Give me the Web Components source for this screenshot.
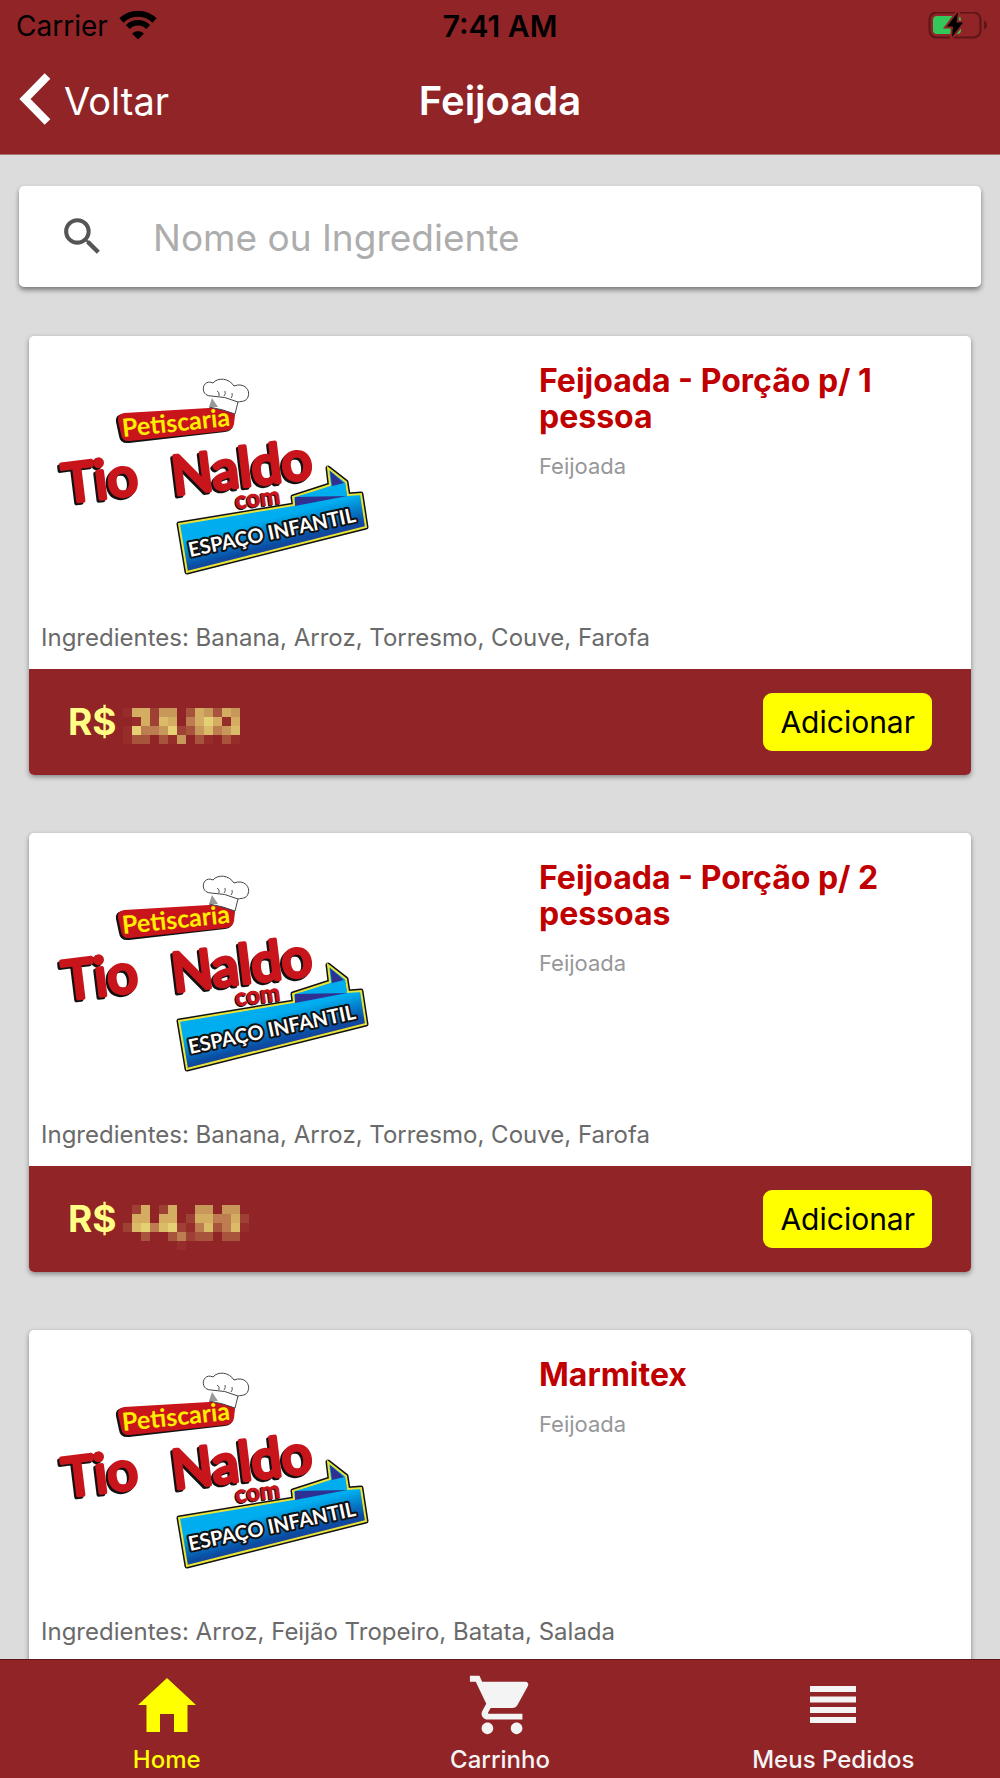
<!DOCTYPE html>
<html lang="pt-BR">
<head>
<meta charset="utf-8">
<meta name="viewport" content="width=device-width, initial-scale=1">
<title>Feijoada</title>
<style>
  :root {
    --brand: #902427;
    --accent: #ffff00;
    --page: #dcdcdc;
  }
  body {
    margin: 0;
    font-family: Inter, "Liberation Sans", sans-serif;
    background: var(--page);
  }
</style>
</head>
<body>

<app-screen>
  <status-bar slot="top" carrier="Carrier" time="7:41 AM"></status-bar>
  <nav-header slot="top" back="Voltar">Feijoada</nav-header>

  <search-box placeholder="Nome ou Ingrediente"></search-box>

  <product-card ingredients="Banana, Arroz, Torresmo, Couve, Farofa">
    <span slot="name">Feijoada - Porção p/ 1 pessoa</span>
    <span slot="category">Feijoada</span>
    <masked-price slot="price" rows="affbee.cfecfe .afbgf.dfhfaf ahddehbcegdeg acc.cae.ca.ca"></masked-price>
  </product-card>

  <product-card ingredients="Banana, Arroz, Torresmo, Couve, Farofa">
    <span slot="name">Feijoada - Porção p/ 2 pessoas</span>
    <span slot="category">Feijoada</span>
    <masked-price slot="price" rows=".bf.bf..ee.ee. .ff.ff.bffddfb bghdghbadgcdga ..c..cdbcc.cc. ......a......."></masked-price>
  </product-card>

  <product-card ingredients="Arroz, Feijão Tropeiro, Batata, Salada">
    <span slot="name">Marmitex</span>
    <span slot="category">Feijoada</span>
    <masked-price slot="price" rows="affbee.cfecfe .afbgf.dfhfaf ahddehbcegdeg acc.cae.ca.ca"></masked-price>
  </product-card>

  <tab-bar slot="bottom">
    <tab-item icon="home" active>Home</tab-item>
    <tab-item icon="cart">Carrinho</tab-item>
    <tab-item icon="list">Meus Pedidos</tab-item>
  </tab-bar>
</app-screen>

<script>
(function() {
  // builds a <template> from a string
  function html(str) {
    const template = document.createElement('template');
    template.innerHTML = str;
    return template;
  }

  class BaseElement extends HTMLElement {
    constructor() {
      super();
      this.attachShadow({ mode: 'open' });
      this.shadowRoot.appendChild(this.constructor.template.content.cloneNode(true));
    }

    $(selector) {
      return this.shadowRoot.querySelector(selector);
    }
  }

  // ---------- layout ----------

  class AppScreen extends BaseElement {}
  AppScreen.template = html(`
    <style>
      :host {
        display: flex;
        flex-direction: column;
        height: 100vh;
      }
      header { background: var(--brand); border-bottom: 1px solid #a87476; }
      main {
        flex: 1;
        min-height: 0;
        overflow-y: auto;
        scrollbar-width: none;
      }
      .list {
        display: flex;
        flex-direction: column;
        gap: 58px;
        padding: 31px 0 58px;
      }
      ::slotted(search-box) { margin: 0 19px -9px; }
      ::slotted(product-card) { margin: 0 29px; }
    </style>
    <header><slot name="top"></slot></header>
    <main><div class="list"><slot></slot></div></main>
    <slot name="bottom"></slot>
  `);

  class StatusBar extends BaseElement {
    connectedCallback() {
      this.$('#carrier').textContent = this.getAttribute('carrier');
      this.$('#time').textContent = this.getAttribute('time');
    }
  }
  StatusBar.template = html(`
    <style>
      :host {
        display: grid;
        grid-template-columns: 1fr auto 1fr;
        align-items: center;
        height: 52px;
        padding: 0 12px;
        font-size: 28px;
        line-height: 32px;
        color: #000;
      }
      .left { display: flex; align-items: center; gap: 11px; padding-left: 4px; }
      #time { font-size: 30px; font-weight: 600; }
      svg { display: block; }
      .battery { justify-self: end; }
    </style>
    <div class="left">
      <span id="carrier"></span>
      <svg width="38" height="30" viewBox="0 2 38 30" fill="none" stroke="#000">
        <path d="M2.500 11.500 A23.500 23.500 0 0 1 35.500 11.500" stroke-width="6"/>
        <path d="M8.800 18 A14.500 14.500 0 0 1 29.200 18" stroke-width="5.500"/>
        <path d="M19 30.500 L13 24.500 Q19 19.500 25 24.500 Z" fill="#000" stroke="none"/>
      </svg>
    </div>
    <span id="time"></span>
    <svg class="battery" width="60" height="28" viewBox="0 1 60 28">
      <rect x="1.500" y="1.500" width="51" height="25" rx="7" fill="none" stroke="#5d1518" stroke-width="2"/>
      <path d="M56 9.500 Q59 11 59 14 Q59 17 56 18.500 Z" fill="#5d1518"/>
      <rect x="5" y="5" width="28" height="18" rx="4" fill="#34c759"/>
      <path d="M30 1 L19 15.500 H25 L24 26 L35 11.500 H28.500 Z" fill="#000" stroke="#902427" stroke-width="4" paint-order="stroke"/>
    </svg>
  `);

  class NavHeader extends BaseElement {
    connectedCallback() {
      this.$('#back').textContent = this.getAttribute('back');
    }
  }
  NavHeader.template = html(`
    <style>
      :host {
        display: grid;
        grid-template-columns: 1fr auto 1fr;
        align-items: center;
        height: 98px;
        padding: 0 20px 4px;
        color: #fff;
        font-size: 40px;
        line-height: 48px;
      }
      button {
        display: flex;
        align-items: center;
        gap: 14px;
        justify-self: start;
        padding: 0;
        border: 0;
        background: none;
        color: inherit;
        font: inherit;
        font-size: 38px;
      }
      h1 { margin: 0; font-size: inherit; font-weight: 600; }
    </style>
    <button type="button">
      <svg width="30" height="52" viewBox="0 2 30 52" fill="none" stroke="#fff" stroke-width="8" overflow="visible">
        <path d="M27.500 3 L5 26 L27.500 49"/>
      </svg>
      <span id="back"></span>
    </button>
    <h1><slot></slot></h1>
  `);

  // ---------- search ----------

  class SearchBox extends BaseElement {
    connectedCallback() {
      const input = this.$('input');
      input.placeholder = this.getAttribute('placeholder');
    }
  }
  SearchBox.template = html(`
    <style>
      :host {
        display: flex;
        align-items: center;
        height: 101px;
        padding: 0 39px;
        gap: 46px;
        box-sizing: border-box;
        background: #fff;
        border-radius: 5px;
        box-shadow: 0 3px 5px rgba(0, 0, 0, .45);
      }
      label { display: block; }
      svg { display: block; }
      input {
        flex: 1;
        min-width: 0;
        padding: 2px 0 0;
        border: 0;
        outline: 0;
        background: none;
        font: inherit;
        font-size: 37px;
        line-height: 48px;
        color: #333;
      }
      input::placeholder { color: #adadad; opacity: 1; }
    </style>
    <label for="q">
      <svg width="49" height="49" viewBox="0 0 24 24" fill="#555">
        <path d="M15.500 14h-.79l-.28-.27A6.471 6.471 0 0 0 16 9.500 6.500 6.500 0 1 0 9.500 16c1.610 0 3.090-.59 4.230-1.570l.27.28v.79l5 4.990L20.490 19l-4.990-5zm-6 0C7.010 14 5 11.990 5 9.500S7.010 5 9.500 5 14 7.010 14 9.500 11.990 14 9.500 14z"/>
      </svg>
    </label>
    <input id="q" type="text">
  `);

  // ---------- product card ----------

  class ShopLogo extends BaseElement {}
  ShopLogo.template = html(`
    <style>
      :host { display: block; }
      svg { display: block; font-family: Lato, "Open Sans", sans-serif; font-weight: 700; }
      text { paint-order: stroke; stroke-linejoin: round; }
    </style>
    <svg width="340" height="230" viewBox="0 0 340 230">
      <defs>
        <linearGradient id="blue" gradientUnits="userSpaceOnUse" x1="225" y1="150" x2="237" y2="196">
          <stop offset=".2" stop-color="#00adef"/>
          <stop offset=".75" stop-color="#0a4da2"/>
          <stop offset="1" stop-color="#2e3192"/>
        </linearGradient>
      </defs>

      <!-- red plate -->
      <path d="M81 54 L184 48 Q193 48 193 56 L192 65 Q191 71 184 72 L88 83 Q79 84 78 76 L75 62 Q74 55 81 54Z" fill="#111"/>
      <path d="M83 53 L185 47 Q194 48 194 55 L193 64 Q192 70 185 71 L89 81 Q81 82 80 74 L77 61 Q76 54 83 53Z" fill="#c8151b"/>

      <!-- chef hat -->
      <path d="M167 47 L170 36 C158 36 161 18 172 23 C177 17 188 18 193 26 C203 22 210 30 207 37 C205 42 201 41 197 42 L194 54 Q181 49 167 47Z" fill="#fff"/>
      <path d="M170 36 C158 36 161 18 172 23 C177 17 188 18 193 26 C203 22 210 30 207 37 C205 42 201 41 197 42 Q184 36 170 36 M197 42 L194 54 Q181 49 168 47" fill="none" stroke="#444"/>
      <path d="M176 31 Q179 32 178 36 M184 31 Q185 34 183 36 M191 33 Q192 36 190 38" fill="none" stroke="#555"/>
      <path d="M168 47 L171 38 L177 47Z" fill="#999"/>

      <g fill="#ffee00" font-size="25">
        <text transform="translate(82 77) rotate(-6)">Petiscaria</text>
      </g>
      <g font-size="54" font-weight="400" stroke-width="4">
        <g fill="#111" stroke="#111">
          <text transform="translate(22 145) rotate(-7)">Tio</text>
          <text transform="translate(131 137) rotate(-7)">Naldo</text>
        </g>
        <g fill="#c8151b" stroke="#c8151b">
          <text transform="translate(24 143) rotate(-7)">Tio</text>
          <text transform="translate(133 135) rotate(-7)">Naldo</text>
        </g>
      </g>
      <g font-size="24" stroke-width="1">
        <text transform="translate(194 150) rotate(-7)" fill="#111" stroke="#111">com</text>
        <text transform="translate(195 149) rotate(-7)" fill="#c8151b" stroke="#c8151b">com</text>
      </g>

      <!-- blue banner -->
      <path d="M138 164 L253 145 L252 137 L289 125 L287 108 L305 122 L307 135 L320 134 L325 167 L146 212Z" fill="none" stroke="#111" stroke-width="5" stroke-linejoin="round"/>
      <path d="M138 164 L253 145 L252 137 L289 125 L287 108 L305 122 L307 135 L320 134 L325 167 L146 212Z" fill="url(#blue)" stroke="#e8e337" stroke-width="2"/>
      <path d="M254 137 L304 123 L306 136Z" fill="#00adef"/>
      <path d="M254 137 L306 136 L254 146Z" fill="#2e3192"/>
      <path d="M289 111 L303 123 L291 126Z" fill="#2e3192"/>
      <g font-size="20">
        <text transform="translate(149 197) rotate(-12)" fill="#fff" stroke="#111" stroke-width="4">ESPAÇO INFANTIL</text>
      </g>
    </svg>
  `);

  // Price hidden behind a mosaic. Each letter in "rows" is one tile,
  // from faint (a) to bright (h); a dot leaves the tile empty.
  const TILES = {
    a: '#962d2b', b: '#9e4034', c: '#a8533c', d: '#bd7d50',
    e: '#c8985a', f: '#d4ac62', g: '#dbbb68', h: '#e6d074'
  };

  class MaskedPrice extends BaseElement {
    connectedCallback() {
      const rows = this.getAttribute('rows').split(' ');
      const svg = this.$('svg');
      let tiles = '';
      rows.forEach((row, y) => {
        [...row].forEach((key, x) => {
          if (TILES[key]) {
            tiles += `<rect x="${x * 9}" y="${y * 9}" width="9" height="9" fill="${TILES[key]}"/>`;
          }
        });
      });
      svg.innerHTML = tiles;
    }
  }
  MaskedPrice.template = html(`
    <style>
      :host { display: block; height: 28px; }
      svg { display: block; }
    </style>
    <svg width="126" height="45" shape-rendering="crispEdges"></svg>
  `);

  class ProductCard extends BaseElement {
    constructor() {
      super();
      this.add = this.add.bind(this);
    }

    connectedCallback() {
      this.$('#ingredients').textContent = 'Ingredientes: ' + this.getAttribute('ingredients');
      this.$('button').addEventListener('click', this.add);
    }

    disconnectedCallback() {
      this.$('button').removeEventListener('click', this.add);
    }

    add() {
      this.dispatchEvent(new CustomEvent('add-product', { bubbles: true }));
    }
  }
  ProductCard.template = html(`
    <style>
      :host {
        display: block;
        flex: none;
        background: #fff;
        border-radius: 5px;
        box-shadow: 0 2px 5px rgba(0, 0, 0, .4);
      }
      .top {
        display: grid;
        grid-template-columns: 498px 1fr;
        min-height: 286px;
        padding: 24px 12px 0;
        box-sizing: border-box;
      }
      h2 {
        margin: 3px 48px 0 0;
        font-size: 32px;
        line-height: 36px;
        font-weight: 700;
        color: #c00000;
      }
      .category {
        margin: 17px 0 0;
        font-size: 22px;
        line-height: 28px;
        color: #97979b;
      }
      #ingredients {
        margin: 0;
        padding: 0 12px 15px;
        font-size: 24px;
        line-height: 32px;
        color: #6a6a6a;
      }
      .bottom {
        display: flex;
        align-items: center;
        justify-content: space-between;
        padding: 24px 39px;
        background: var(--brand);
        border-radius: 0 0 5px 5px;
      }
      .price {
        display: flex;
        align-items: center;
        gap: 6px;
        font-size: 37px;
        line-height: 40px;
        font-weight: 700;
        color: #ffff85;
      }
      button {
        height: 58px;
        padding: 0 17px;
        border: 0;
        border-radius: 9px;
        background: var(--accent);
        color: #000;
        font: inherit;
        font-size: 30px;
      }
    </style>
    <div class="top">
      <shop-logo></shop-logo>
      <div>
        <h2><slot name="name"></slot></h2>
        <p class="category"><slot name="category"></slot></p>
      </div>
    </div>
    <p id="ingredients"></p>
    <div class="bottom">
      <div class="price"><span>R$</span><slot name="price"></slot></div>
      <button type="button">Adicionar</button>
    </div>
  `);

  // ---------- tabs ----------

  const ICONS = {
    home: '<path d="M35 8 L64 35 H55.500 V62 H42 V44 H28 V62 H14.500 V35 H6 Z"/>',
    cart: '<path transform="translate(2 0) scale(2.917)" d="M7 18c-1.100 0-1.990.9-1.990 2S5.900 22 7 22s2-.9 2-2-.9-2-2-2zM1 2v2h2l3.600 7.590-1.350 2.450c-.16.28-.25.61-.25.96 0 1.100.9 2 2 2h12v-2H7.420c-.14 0-.25-.11-.25-.25l.03-.12.9-1.630h7.450c.75 0 1.410-.41 1.750-1.030l3.580-6.490A1.003 1.003 0 0 0 20 4H5.210l-.94-2H1zm16 16c-1.100 0-1.990.9-1.990 2s.89 2 1.990 2 2-.9 2-2-.9-2-2-2z"/>',
    list: '<path d="M12 16h46v6H12zM12 26.500h46v6H12zM12 37h46v6H12zM12 47h46v6H12z"/>'
  };

  class TabBar extends BaseElement {}
  TabBar.template = html(`
    <style>
      :host {
        display: block;
        flex: none;
        background: var(--brand);
        border-top: 1px solid #5c1719;
      }
      nav {
        display: grid;
        grid-auto-flow: column;
        grid-auto-columns: 1fr;
        height: 118px;
      }
    </style>
    <nav><slot></slot></nav>
  `);

  class TabItem extends BaseElement {
    connectedCallback() {
      this.$('svg').innerHTML = ICONS[this.getAttribute('icon')];
    }
  }
  TabItem.template = html(`
    <style>
      :host { display: block; color: #f4f4f4; }
      :host([active]) { color: var(--accent); }
      a {
        display: flex;
        flex-direction: column;
        align-items: center;
        gap: 4px;
        padding-top: 10px;
        color: inherit;
        text-decoration: none;
        font-size: 24px;
        line-height: 32px;
        font-weight: 500;
      }
    </style>
    <a href="#">
      <svg width="70" height="70" viewBox="0 0 70 70" fill="currentColor"></svg>
      <slot></slot>
    </a>
  `);

  window.customElements.define('app-screen', AppScreen);
  window.customElements.define('status-bar', StatusBar);
  window.customElements.define('nav-header', NavHeader);
  window.customElements.define('search-box', SearchBox);
  window.customElements.define('shop-logo', ShopLogo);
  window.customElements.define('masked-price', MaskedPrice);
  window.customElements.define('product-card', ProductCard);
  window.customElements.define('tab-bar', TabBar);
  window.customElements.define('tab-item', TabItem);
})();
</script>
</body>
</html>
